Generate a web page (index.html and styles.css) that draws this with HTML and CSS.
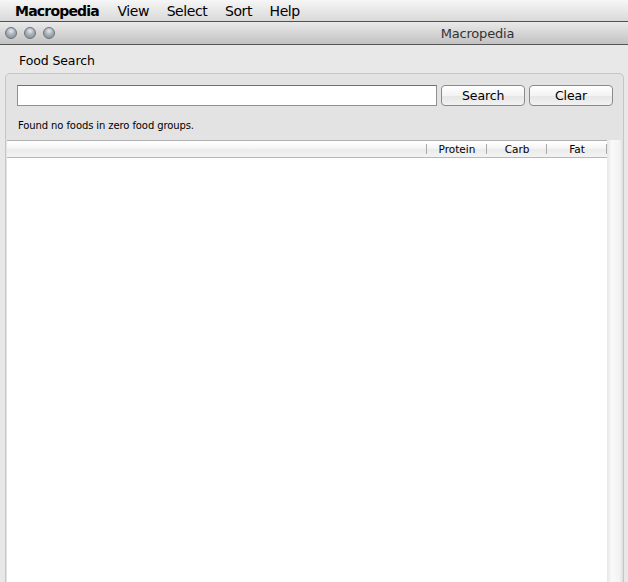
FILE: index.html
```html
<!DOCTYPE html>
<html>
<head>
<meta charset="utf-8">
<link rel="stylesheet" href="styles.css">
</head>
<body>
<div class="menubar">
  <span class="menu app">Macropedia</span>
  <span class="menu">View</span>
  <span class="menu">Select</span>
  <span class="menu">Sort</span>
  <span class="menu">Help</span>
</div>
<div class="titlebar">
  <div class="lights">
    <span class="light"></span>
    <span class="light"></span>
    <span class="light"></span>
  </div>
  <div class="title">Macropedia</div>
</div>
<div class="window">
  <div class="tab-label">Food Search</div>
  <div class="group">
    <div class="search-row">
      <input class="field" type="text">
      <button class="btn">Search</button>
      <button class="btn">Clear</button>
    </div>
    <div class="status">Found no foods in zero food groups.</div>
    <div class="table-wrap">
      <div class="table">
        <div class="thead">
          <div class="th name"></div>
          <div class="th num">Protein</div>
          <div class="th num">Carb</div>
          <div class="th num">Fat</div>
        </div>
        <div class="tbody"></div>
      </div>
      <div class="scroller"></div>
    </div>
  </div>
</div>
</body>
</html>
```
FILE: styles.css
```css
html, body {
  margin: 0;
  padding: 0;
}
body {
  width: 628px;
  height: 582px;
  overflow: hidden;
  font-family: "DejaVu Sans", "Liberation Sans", sans-serif;
  background: #e8e8e8;
  display: flex;
  flex-direction: column;
  color: #000;
}
.menubar {
  height: 21px;
  border-bottom: 1px solid #505050;
  background: linear-gradient(#f6f6f6, #d9d9d9);
  display: flex;
  align-items: center;
  padding-left: 15px;
  gap: 17.5px;
  font-size: 14px;
  flex: none;
}
.menu {
  letter-spacing: -0.4px;
}
.menu.app {
  font-weight: bold;
  letter-spacing: -0.8px;
  margin-right: 1px;
}
.titlebar {
  height: 22px;
  border-bottom: 1px solid #555;
  background: linear-gradient(#e9e9e9, #c2c2c2);
  display: flex;
  align-items: center;
  flex: none;
}
.lights {
  display: flex;
  gap: 7px;
  padding-left: 5px;
}
.light {
  width: 12px;
  height: 12px;
  border-radius: 50%;
  box-sizing: border-box;
  border: 1px solid #6f747a;
  background: radial-gradient(circle at 50% 30%, #e6eaef 0, #a8b0b9 45%, #7d868f 100%);
}
.title {
  flex: 1;
  text-align: center;
  padding-left: 272px;
  font-size: 13px;
  letter-spacing: -0.2px;
  color: #333;
}
.window {
  flex: 1;
  display: flex;
  flex-direction: column;
  min-height: 0;
}
.tab-label {
  font-size: 12.5px;
  letter-spacing: -0.1px;
  padding: 8px 0 0 19px;
  height: 20px;
}
.group {
  flex: 1;
  margin: 0 4px 0 5px;
  border: 1px solid #c6c6c6;
  border-bottom: none;
  border-radius: 5px 5px 0 0;
  background: #e3e3e3;
  display: flex;
  flex-direction: column;
  min-height: 0;
}
.search-row {
  display: flex;
  align-items: center;
  padding: 11px 10px 0 11px;
  height: 21px;
}
.field {
  width: 421px;
  height: 21px;
  box-sizing: border-box;
  border: 1px solid #8f8f8f;
  border-top-color: #6f6f6f;
  background: #fff;
  margin: 0;
  padding: 0;
  outline: none;
}
.btn {
  width: 84px;
  height: 21px;
  margin: 0 0 0 4px;
  box-sizing: border-box;
  border: 1px solid #8a8a8a;
  border-radius: 4px;
  background: linear-gradient(#ffffff, #f3f3f3 50%, #e6e6e6 51%, #f2f2f2);
  font-family: "DejaVu Sans", "Liberation Sans", sans-serif;
  font-size: 12.5px;
  letter-spacing: -0.1px;
  padding: 0;
  color: #000;
}
.status {
  font-size: 10px;
  letter-spacing: -0.1px;
  padding: 14px 0 0 12px;
  height: 20px;
}
.table-wrap {
  flex: 1;
  display: flex;
  margin-left: 1px;
  min-height: 0;
}
.table {
  width: 600px;
  display: flex;
  flex-direction: column;
  background: #fff;
}
.thead {
  height: 16px;
  border-top: 1px solid #b0b0b0;
  border-bottom: 1px solid #b8b8b8;
  background: linear-gradient(#ffffff, #f4f4f4 50%, #ebebeb 51%, #f3f3f3);
  display: flex;
  align-items: center;
  flex: none;
}
.th {
  font-size: 10.5px;
  height: 16px;
  line-height: 16px;
  text-align: center;
  position: relative;
}
.th.name {
  width: 420px;
}
.th.num {
  width: 60px;
}
.th::after {
  content: "";
  position: absolute;
  right: 0;
  top: 3px;
  height: 10px;
  border-right: 1px solid #a8a8a8;
}
.tbody {
  flex: 1;
  background: #fff;
}
.scroller {
  width: 16px;
  background: linear-gradient(to right, #e6e6e6, #fafafa 30%, #f2f2f2 80%, #dcdcdc);
}
```
